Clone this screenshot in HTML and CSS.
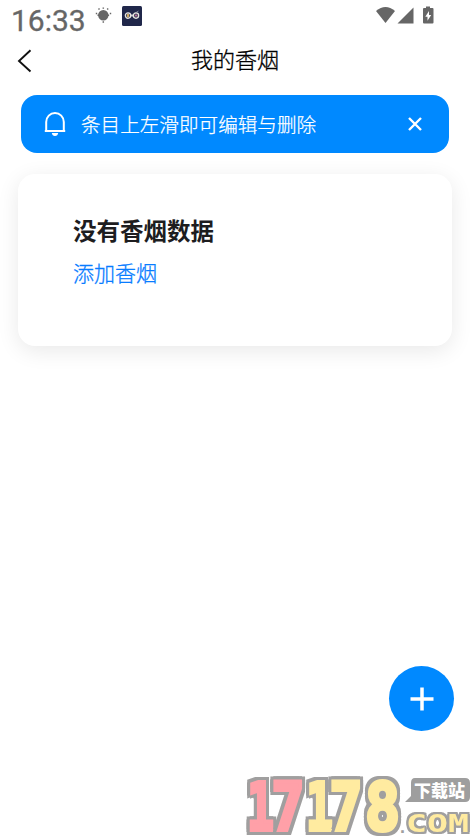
FILE: index.html
```html
<!DOCTYPE html>
<html lang="zh-CN">
<head>
<meta charset="utf-8">
<title>我的香烟</title>
<link rel="stylesheet" href="styles.css">
</head>
<body>
<div class="status">
  <span class="time">16:33</span>
  <svg class="sun" width="18" height="18" viewBox="0 0 18 18"><circle cx="8.300" cy="9.300" r="5.200"/><g class="rays"><path d="M3.500 2.500l1 1M8.300 1.500v1.200M13.200 2.500l-1 1M.8 7.500h1.400M14.800 7.500h1.400M8.300 15.200v1.600M2.500 9.300h11.600"/></g></svg>
  <svg class="game" width="20" height="20" viewBox="0 0 20 20"><rect width="20" height="20" rx="1.500" fill="#20274a"/><path d="M8 8.500h4v2H8z" fill="#c7c9d0"/><circle cx="6" cy="9.600" r="2.700" fill="#44465a" stroke="#e8e6e2" stroke-width="1.200"/><circle cx="14" cy="9.600" r="2.700" fill="#44465a" stroke="#e8e6e2" stroke-width="1.200"/><path d="M6 8v3.200" stroke="#dfb668" stroke-width="1.800"/><path d="M13 9.500h2.200" stroke="#b66a9a" stroke-width="1.600"/><path d="M14.500 6l2-1" stroke="#98a0b5" stroke-width=".7"/></svg>
  <svg class="signals" width="60" height="20" viewBox="0 0 60 20"><path d="M1 5Q10.500-3 20 5L10.500 17z"/><path d="M38.500 1.500v16h-16z"/><path d="M51 .5h4V2h2.500q1 0 1 1v13.500q0 1-1 1H49q-1 0-1-1V3q0-1 1-1h2z"/><path d="M54 5l-3.700 5.700h2.200v4.100l3.700-5.800H54z" fill="#fff"/></svg>
</div>
<header class="nav">
  <svg class="back" width="16" height="24" viewBox="0 0 16 24"><path d="M13.500 1.300L2 12l11.500 10.500"/></svg>
  <h1 class="title">我的香烟</h1>
</header>
<section class="notice">
  <svg class="bell" width="24" height="26" viewBox="0 0 24 26"><path d="M3.200 20V11a8.800 9 0 0 1 17.600 0v9M1.800 20h20.400"/><path class="clapper" d="M8.800 22h6.400q-.5 3-3.200 3t-3.200-3z"/></svg>
  <span class="message">条目上左滑即可编辑与删除</span>
  <svg class="close" width="16" height="16" viewBox="0 0 16 16"><path d="M2 2l12 12M14 2L2 14"/></svg>
</section>
<section class="card">
  <h2 class="empty">没有香烟数据</h2>
  <a class="add">添加香烟</a>
</section>
<div class="fab"><svg width="24" height="24" viewBox="0 0 24 24"><path d="M12 .5v23M.5 12h23"/></svg></div>
<svg class="mark" width="226" height="64" viewBox="244 772 226 64">
  <g class="digits">
    <text class="pink" x="247" y="830" textLength="27" lengthAdjust="spacingAndGlyphs">1</text>
    <text class="pink" x="271.500" y="830" textLength="33" lengthAdjust="spacingAndGlyphs">7</text>
    <text x="306" y="830" textLength="27" lengthAdjust="spacingAndGlyphs">1</text>
    <text x="329.500" y="830" textLength="33" lengthAdjust="spacingAndGlyphs">7</text>
    <text x="365" y="830" textLength="35" lengthAdjust="spacingAndGlyphs">8</text>
  </g>
  <path class="tag" d="M415 778h50q5 0 5 5v14q0 5-5 5h-60l6-6v-13q0-5 4-5z"/>
  <text class="site" x="414" y="796.500" textLength="51" lengthAdjust="spacingAndGlyphs">下载站</text>
  <text class="dot" x="400" y="833">.</text>
  <text class="com" x="406" y="832" textLength="63" lengthAdjust="spacingAndGlyphs">COM</text>
</svg>
</body>
</html>
```
FILE: styles.css
```css
* { box-sizing: border-box; }
body {
  margin: 0;
  height: 836px;
  overflow: hidden;
  background: #fff;
  position: relative;
  font-family: "Noto Sans CJK SC", sans-serif;
}
svg { display: block; flex: none; }
.status { height: 38px; display: flex; align-items: flex-start; padding: 6px 36px 0 11px; }
.time { width: 84px; font: 400 30px/30px Roboto, sans-serif; color: #666; -webkit-text-stroke: .3px #666; }
.sun { fill: #666; }
.rays { fill: none; stroke: #666; stroke-width: 1.5; }
.game { margin-left: 9px; }
.signals { margin-left: auto; margin-right: -1px; fill: #666; }
.nav { height: 45px; padding: 0 17px; display: flex; align-items: center; }
.back { fill: none; stroke: #111; stroke-width: 1.9; }
.title { margin: -5px 0 0; flex: 1; padding-right: 16px; text-align: center; font-size: 22px; line-height: 32px; font-weight: 300; color: #000; -webkit-text-stroke: .3px #000; }
.notice {
  margin: 12px 21px 0;
  height: 58px;
  border-radius: 16px;
  background: #0089ff;
  display: flex;
  align-items: center;
  padding: 0 26px 0 22px;
  color: #fff;
}
.bell { fill: none; stroke: #fff; stroke-width: 2; }
.clapper { fill: #fff; stroke: none; }
.message { flex: 1; margin-left: 14px; font-size: 19.6px; line-height: 28px; font-weight: 300; -webkit-text-stroke: .25px #fff; }
.close { fill: none; stroke: #fff; stroke-width: 2.4; }
.card {
  margin: 21px 18px 0;
  height: 171.5px;
  border-radius: 17px;
  background: #fff;
  box-shadow: 0 5px 22px rgba(0, 0, 0, .09);
  padding: 38px 55px;
}
.empty { margin: 0; font-size: 23.5px; line-height: 36px; font-weight: 700; color: #1d1d1f; }
.add { display: block; margin-top: 8px; font-size: 21px; line-height: 32px; font-weight: 300; color: #087cff; -webkit-text-stroke: .3px #087cff; }
.fab {
  position: absolute;
  left: 389px;
  top: 666px;
  width: 65px;
  height: 65px;
  border-radius: 50%;
  background: #0089ff;
  display: grid;
  place-items: center;
}
.fab svg { fill: none; stroke: #fff; stroke-width: 3.5; }
.mark { position: absolute; left: 244px; top: 772px; overflow: visible; }
.digits text {
  font: 700 65px "DejaVu Sans Mono", monospace;
  fill: #ffeba0;
  stroke: #ffeba0;
  stroke-width: 4px;
  filter: drop-shadow(3px 0 0 #a09f9f) drop-shadow(-3px 0 0 #a09f9f) drop-shadow(0 3px 0 #a09f9f) drop-shadow(0 -3px 0 #a09f9f);
}
.digits .pink { fill: #ffa0a8; stroke: #ffa0a8; }
.tag { fill: #9e9e9e; }
.site { font: 900 16.5px "Noto Sans CJK SC", sans-serif; fill: #fff; }
.dot { font: 700 18px "Liberation Sans", sans-serif; fill: #a09f9f; }
.com {
  font: 700 24.5px "DejaVu Sans Mono", monospace;
  fill: #ffeba0;
  filter: drop-shadow(2px 0 0 #a09f9f) drop-shadow(-2px 0 0 #a09f9f) drop-shadow(0 2px 0 #a09f9f) drop-shadow(0 -2px 0 #a09f9f);
}
```
